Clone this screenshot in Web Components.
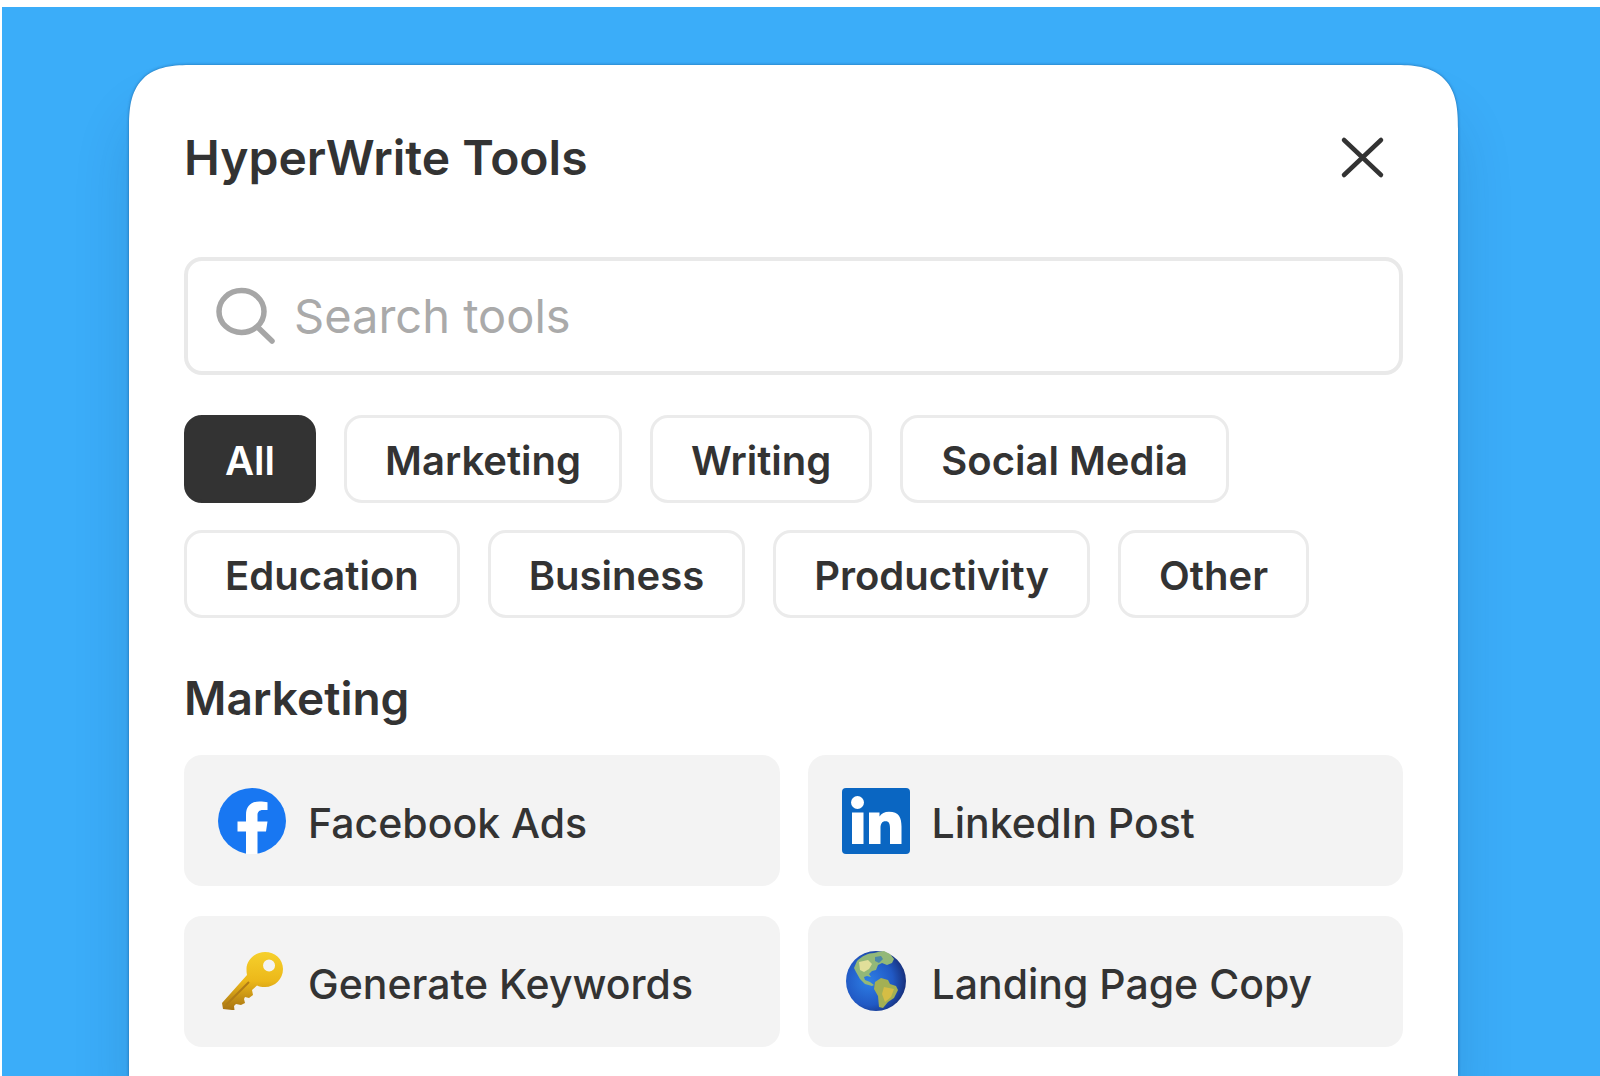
<!DOCTYPE html>
<html lang="en">
<head>
<meta charset="utf-8">
<meta name="viewport" content="width=device-width, initial-scale=1">
<title>HyperWrite Tools</title>
<style>
  body {
    margin: 0;
    background: #fff;
    font-family: Inter, "Liberation Sans", sans-serif;
    color: #333;
  }
</style>
</head>
<body>
<tools-stage>
  <tools-panel heading="HyperWrite Tools">
    <search-field placeholder="Search tools"></search-field>
    <filter-list>
      <filter-chip active>All</filter-chip>
      <filter-chip>Marketing</filter-chip>
      <filter-chip>Writing</filter-chip>
      <filter-chip>Social Media</filter-chip>
      <filter-chip>Education</filter-chip>
      <filter-chip>Business</filter-chip>
      <filter-chip>Productivity</filter-chip>
      <filter-chip>Other</filter-chip>
    </filter-list>
    <tool-section heading="Marketing">
      <tool-card>
        <svg slot="icon" viewBox="0 0 68 66" aria-hidden="true">
          <ellipse cx="34" cy="33" rx="34" ry="33" fill="#1877f2"/>
          <path fill="#fff" d="M28 66V43.500H19.500V33.500H28V27c0-9 5-13.500 13.500-13.500 3 0 6 .3 8 .7V22h-4.500c-4 0-5.500 2.200-5.500 5.200v6.300h10L48 43.500h-8.500V66c-3.500.5-8 .5-11.500 0z"/>
        </svg>
        Facebook Ads
      </tool-card>
      <tool-card>
        <svg slot="icon" viewBox="0 0 68 66" aria-hidden="true">
          <rect width="68" height="66" rx="4" fill="#0a66c2"/>
          <g fill="#fff">
            <circle cx="15.500" cy="14.500" r="6.500"/>
            <path d="M10 24.500h11.500V56H10zM27 24.500h10.500v4c1.800-3 5.200-4.800 9.500-4.800 10 0 12.500 6 12.500 14.800V56H48V40.500c0-4.500-.8-7.200-4.500-7.200s-5 2.700-5 7.200V56H27z"/>
          </g>
        </svg>
        LinkedIn Post
      </tool-card>
      <tool-card>
        <svg slot="icon" viewBox="0 0 68 66" aria-hidden="true">
          <defs>
            <linearGradient id="key-gold" x1="0" y1="0" x2="0" y2="1">
              <stop offset="0" stop-color="#f6d02c"/>
              <stop offset=".5" stop-color="#ecb81a"/>
              <stop offset="1" stop-color="#a87413"/>
            </linearGradient>
          </defs>
          <path fill="url(#key-gold)" fill-rule="evenodd" d="M47 3c10 0 18 7 18 17s-8 18-18 18c-3 0-6-.5-8-1.500L34 41l1 5-4 3-4-1-1 2 1 4-4 2-5-1-2 2 .5 4L14 61l-9-1-1-6 25-28c-.5-2-.5-4-.5-6C28.500 11 37 3 47 3zm4 7.500a6 6 0 1 0 .1 12 6 6 0 0 0-.1-12z"/>
          <path fill="none" stroke="#b07c16" stroke-width="2" d="M31 33 8 56"/>
        </svg>
        Generate Keywords
      </tool-card>
      <tool-card>
        <svg slot="icon" viewBox="0 0 68 66" aria-hidden="true">
          <defs>
            <radialGradient id="globe-sea" cx=".38" cy=".5" r=".62">
              <stop offset="0" stop-color="#2d7fe6"/>
              <stop offset=".65" stop-color="#2159c4"/>
              <stop offset="1" stop-color="#17307c"/>
            </radialGradient>
          </defs>
          <circle cx="34" cy="32" r="30" fill="url(#globe-sea)"/>
          <path fill="#93b878" d="M15 12c5-5 11-8 17-8l4-1 6-1 6 3 4 5-2 4-5 2-5-2-4 2-2 5-4 1-3 3 2 3-4-1-3 1 1 3 5 2 4 3-2 1-7-2-5-5-4-7-2-4z"/>
          <path fill="#e1df9a" d="m17 13 9-2 4 4-3 5-5 3-4-2z"/>
          <path fill="#4c88a8" d="m33 8 6-1 2 3-4 4-4-2z"/>
          <path fill="#a3b054" d="m33 33 6-4 7 2 2 4 6 2 2 4-4 8-6 4-5 6-4-1-1-11-4-7z"/>
          <path fill="#d5bd45" d="m42 38 10 2-3 8-6 5-3-8z"/>
        </svg>
        Landing Page Copy
      </tool-card>
    </tool-section>
  </tools-panel>
</tools-stage>

<script>
class ToolsStage extends HTMLElement {
  constructor() {
    super();

    this.attachShadow({ mode: 'open' });
  }

  connectedCallback() {
    this.shadowRoot.innerHTML = `
      <style>
        :host {
          display: flex;
          box-sizing: border-box;
          min-height: calc(100vh - 7px);
          margin: 7px 0 0 2px;
          padding: 58px 142px 0 127px;
          background: #3badf9;
          overflow: hidden;
        }

        ::slotted(*) {
          flex: 1;
          min-width: 0;
        }
      </style>
      <slot></slot>
    `;
  }
}

class ToolsPanel extends HTMLElement {
  constructor() {
    super();

    this.attachShadow({ mode: 'open' });
  }

  connectedCallback() {
    this.shadowRoot.innerHTML = `
      <style>
        :host {
          display: block;
          padding: 65px 55px 28px;
          border-radius: 52px 52px 0 0;
          background: #fff;
          box-shadow: 0 0 3px rgba(0, 40, 90, 0.5), 0 48px 56px rgba(0, 40, 80, 0.15);
        }

        @supports (corner-shape: superellipse(1.5)) {
          :host {
            border-radius: 64px 64px 0 0;
            corner-shape: superellipse(1.5);
          }
        }

        header {
          display: flex;
          align-items: center;
          justify-content: space-between;
          margin-bottom: 71px;
          padding-right: 16px;
        }

        h1 {
          margin: 0;
          font-size: 48px;
          line-height: 56px;
          font-weight: 600;
        }

        button {
          display: flex;
          padding: 0;
          border: 0;
          background: none;
          color: inherit;
          cursor: pointer;
        }

        svg {
          width: 48px;
          height: 48px;
        }
      </style>
      <header>
        <h1></h1>
        <button type="button" aria-label="Close">
          <svg viewBox="0 0 48 48" fill="none" stroke="currentColor" stroke-width="4.500" stroke-linecap="round">
            <path d="M5 6l37 35M42 6L5 41"/>
          </svg>
        </button>
      </header>
      <slot></slot>
    `;
    this.shadowRoot.querySelector('h1').textContent = this.getAttribute('heading');
  }
}

class SearchField extends HTMLElement {
  constructor() {
    super();

    this.attachShadow({ mode: 'open' });
  }

  connectedCallback() {
    this.shadowRoot.innerHTML = `
      <style>
        :host {
          display: flex;
          align-items: center;
          gap: 18px;
          box-sizing: border-box;
          height: 118px;
          margin-bottom: 40px;
          padding: 0 28px;
          border: 4px solid #e9e9e9;
          border-radius: 18px;
        }

        label {
          display: flex;
        }

        svg {
          width: 60px;
          height: 60px;
        }

        input {
          flex: 1;
          min-width: 0;
          padding: 0;
          border: 0;
          outline: 0;
          background: none;
          color: #333;
          font: 400 47px/56px Inter, "Liberation Sans", sans-serif;
        }

        input::placeholder {
          color: #aaa;
          opacity: 1;
        }
      </style>
      <label for="query">
        <svg viewBox="0 0 60 60" fill="none" stroke="#a6a6a6" stroke-width="5.500" aria-hidden="true">
          <ellipse cx="25.500" cy="25.500" rx="22.500" ry="21"/>
          <path stroke-linecap="round" d="M41.500 41L56 55"/>
        </svg>
      </label>
      <input id="query" type="text">
    `;
    const input = this.shadowRoot.querySelector('input');
    input.placeholder = this.getAttribute('placeholder');
    input.setAttribute('aria-label', input.placeholder);
  }
}

class FilterList extends HTMLElement {
  constructor() {
    super();

    this.attachShadow({ mode: 'open' });
  }

  connectedCallback() {
    this.shadowRoot.innerHTML = `
      <style>
        :host {
          display: flex;
          flex-wrap: wrap;
          gap: 27px 28px;
          margin-bottom: 52px;
        }
      </style>
      <slot></slot>
    `;
    this.addEventListener('click', this._select);
  }

  disconnectedCallback() {
    this.removeEventListener('click', this._select);
  }

  _select(event) {
    const chip = event.target.closest('filter-chip');
    if (!chip) {
      return;
    }
    this.querySelectorAll('filter-chip').forEach(item => {
      item.toggleAttribute('active', item === chip);
    });
  }
}

class FilterChip extends HTMLElement {
  constructor() {
    super();

    this.attachShadow({ mode: 'open' });
  }

  connectedCallback() {
    this.shadowRoot.innerHTML = `
      <style>
        :host {
          display: block;
        }

        button {
          display: block;
          height: 88px;
          padding: 4px 38px 0;
          border: 3px solid #ebebeb;
          border-radius: 18px;
          background: #fff;
          color: #333;
          font: 600 40px/48px Inter, "Liberation Sans", sans-serif;
          white-space: nowrap;
          cursor: pointer;
        }

        :host([active]) button {
          border-color: #333;
          background: #333;
          color: #fff;
        }
      </style>
      <button type="button"><slot></slot></button>
    `;
  }
}

class ToolSection extends HTMLElement {
  constructor() {
    super();

    this.attachShadow({ mode: 'open' });
  }

  connectedCallback() {
    this.shadowRoot.innerHTML = `
      <style>
        :host {
          display: block;
        }

        h2 {
          margin: 0 0 29px;
          font-size: 46px;
          line-height: 56px;
          font-weight: 600;
        }

        .grid {
          display: grid;
          grid-template-columns: 1fr 1fr;
          gap: 30px 28px;
        }
      </style>
      <h2></h2>
      <div class="grid"><slot></slot></div>
    `;
    this.shadowRoot.querySelector('h2').textContent = this.getAttribute('heading');
  }
}

class ToolCard extends HTMLElement {
  constructor() {
    super();

    this.attachShadow({ mode: 'open' });
  }

  connectedCallback() {
    this.shadowRoot.innerHTML = `
      <style>
        :host {
          display: block;
        }

        button {
          display: flex;
          align-items: center;
          gap: 22px;
          width: 100%;
          height: 131px;
          padding: 0 34px;
          border: 0;
          border-radius: 18px;
          background: #f3f3f3;
          color: #333;
          font: 500 41px/48px Inter, "Liberation Sans", sans-serif;
          text-align: left;
          white-space: nowrap;
          cursor: pointer;
        }

        span {
          padding-top: 4px;
        }

        ::slotted(svg) {
          flex: none;
          width: 68px;
          height: 66px;
        }
      </style>
      <button type="button">
        <slot name="icon"></slot>
        <span><slot></slot></span>
      </button>
    `;
  }
}

customElements.define('tools-stage', ToolsStage);
customElements.define('tools-panel', ToolsPanel);
customElements.define('search-field', SearchField);
customElements.define('filter-list', FilterList);
customElements.define('filter-chip', FilterChip);
customElements.define('tool-section', ToolSection);
customElements.define('tool-card', ToolCard);
</script>
</body>
</html>
